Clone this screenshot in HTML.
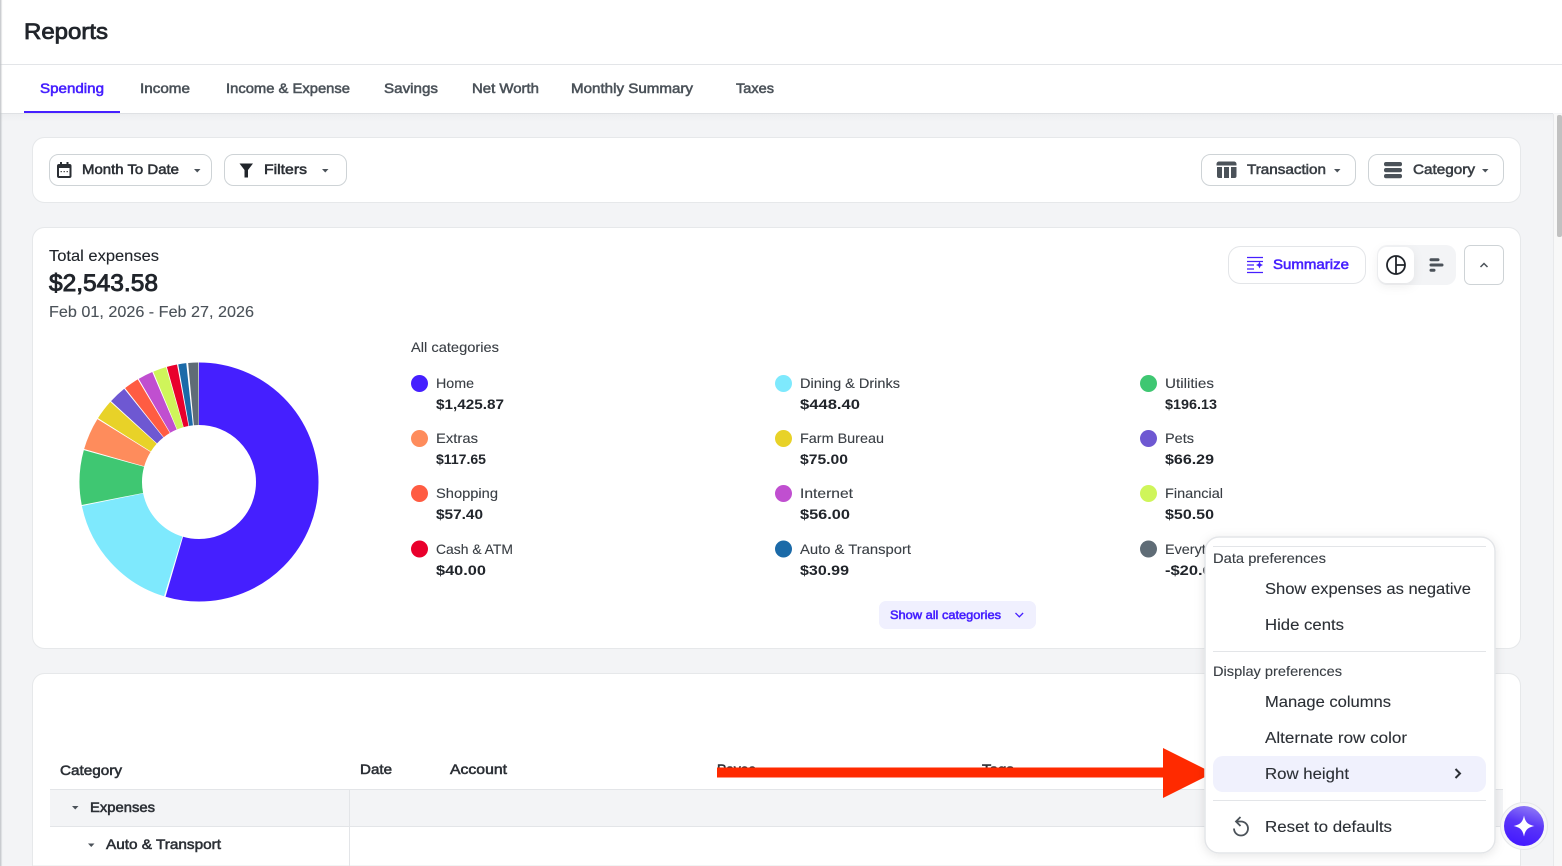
<!DOCTYPE html>
<html lang="en">
<head>
<meta charset="utf-8">
<title>Reports</title>
<style>
html,body{margin:0;padding:0;width:1562px;height:866px;overflow:hidden;background:#f3f4f6}
svg{display:block}
text{font-family:"Liberation Sans",sans-serif;font-size:14px;fill:#21252b}
.m{font-weight:700}
.tab{fill:#4b5259;stroke:#4b5259;stroke-width:.55}
.tp{fill:#451fff;stroke:#451fff;stroke-width:.55}
.bt{fill:#2c3036;stroke:#2c3036;stroke-width:.55}
.bt2{fill:#3a3f45;stroke:#3a3f45;stroke-width:.55}
.th{fill:#2c3036;stroke:#2c3036;stroke-width:.55}
.l{fill:#3a3f45;stroke:#3a3f45;stroke-width:.12}
.b16{font-size:16px;stroke:#21252b;stroke-width:.12}
.g{fill:#4b5259;stroke:#4b5259}
.mi{font-size:16px;fill:#2c3036;stroke:#2c3036;stroke-width:.12}
.card{fill:#fff;stroke:#e6e8ea;stroke-width:1}
.btn{fill:#fff;stroke:#ced3d6;stroke-width:1}
.line{stroke:#e3e5e8;stroke-width:1}
</style>
</head>
<body>
<svg width="1562" height="866" viewBox="0 0 1562 866" xmlns="http://www.w3.org/2000/svg">
<defs>
<linearGradient id="fab" x1="0.7" y1="0" x2="0.4" y2="1"><stop offset="0" stop-color="#8f7bf6"/><stop offset="0.45" stop-color="#5a35f8"/><stop offset="1" stop-color="#4318ff"/></linearGradient>
<linearGradient id="edge" x1="0" y1="0" x2="1" y2="0"><stop offset="0" stop-color="#bfc2c6"/><stop offset="1" stop-color="#bfc2c6" stop-opacity="0"/></linearGradient>
<linearGradient id="tabshadow" x1="0" y1="0" x2="0" y2="1"><stop offset="0" stop-color="#e6e8ea"/><stop offset="1" stop-color="#f3f4f6"/></linearGradient>
<filter id="sh" x="-15%" y="-15%" width="130%" height="130%"><feDropShadow dx="0" dy="2" stdDeviation="5" flood-color="#000" flood-opacity="0.1"/></filter>
<filter id="sh2" x="-40%" y="-40%" width="180%" height="200%"><feDropShadow dx="0" dy="3" stdDeviation="5" flood-color="#000" flood-opacity="0.07"/></filter>
</defs>

<rect width="1562" height="866" fill="#f3f4f6"/>
<!-- header -->
<rect width="1562" height="113" fill="#fff"/>
<line x1="0" y1="64.5" x2="1562" y2="64.5" class="line"/>
<line x1="0" y1="113.5" x2="1553" y2="113.5" stroke="#dfe1e4"/>
<rect x="0" y="114" width="1553" height="8" fill="url(#tabshadow)" opacity=".5"/>
<text x="24" y="39" style="font-size:22px;stroke:#21252b;stroke-width:.8" textLength="84" lengthAdjust="spacingAndGlyphs">Reports</text>

<text x="40" y="93" class="tp" textLength="64" lengthAdjust="spacingAndGlyphs">Spending</text>
<text x="140" y="93" class="tab" textLength="50" lengthAdjust="spacingAndGlyphs">Income</text>
<text x="226" y="93" class="tab" textLength="124" lengthAdjust="spacingAndGlyphs">Income &amp; Expense</text>
<text x="384" y="93" class="tab" textLength="54" lengthAdjust="spacingAndGlyphs">Savings</text>
<text x="472" y="93" class="tab" textLength="67" lengthAdjust="spacingAndGlyphs">Net Worth</text>
<text x="571" y="93" class="tab" textLength="122" lengthAdjust="spacingAndGlyphs">Monthly Summary</text>
<text x="736" y="93" class="tab" textLength="38" lengthAdjust="spacingAndGlyphs">Taxes</text>
<rect x="24" y="111" width="96" height="2" fill="#451fff"/>

<!-- filter card -->
<rect x="32.5" y="137.5" width="1488" height="65" rx="12" class="card"/>
<rect x="49.5" y="154.5" width="162" height="31" rx="9" class="btn"/>
<rect x="57" y="164" width="14.500" height="14" rx="2" fill="#2a2e33"/>
<rect x="59" y="168" width="10.500" height="8" fill="#fff"/>
<rect x="60" y="162" width="2" height="3" fill="#2a2e33"/><rect x="66.500" y="162" width="2" height="3" fill="#2a2e33"/>
<rect x="60.500" y="171" width="1.500" height="1.200" fill="#555"/><rect x="63.500" y="171" width="1.500" height="1.200" fill="#555"/><rect x="66.500" y="171" width="1.500" height="1.200" fill="#555"/>
<text x="82" y="174" class="bt" textLength="97" lengthAdjust="spacingAndGlyphs">Month To Date</text>
<path d="M194 169h6.500l-3.250 3.500z" fill="#4b5259"/>
<rect x="224.500" y="154.500" width="122" height="31" rx="9" class="btn"/>
<path d="M239.500 163.500h13.500l-5 6.500v7.500h-3.500v-7.500z" fill="#21252b"/>
<text x="264" y="174" class="bt" textLength="43" lengthAdjust="spacingAndGlyphs">Filters</text>
<path d="M322 169h6.500l-3.250 3.500z" fill="#4b5259"/>

<rect x="1201.500" y="154.500" width="154" height="31" rx="9" class="btn"/>
<path d="M1219 161.500h15a2.500 2.500 0 0 1 2.500 2.500v1.500h-20V164a2.500 2.500 0 0 1 2.500-2.500z" fill="#4b5259"/>
<path d="M1217 167h5v11h-3a2 2 0 0 1-2-2zM1224 167h5v11h-5zM1231 167h5.500v9a2 2 0 0 1-2 2h-3.500z" fill="#4b5259"/>
<text x="1247" y="174" class="bt2" textLength="79" lengthAdjust="spacingAndGlyphs">Transaction</text>
<path d="M1334 169h6.500l-3.250 3.500z" fill="#4b5259"/>
<rect x="1368.500" y="154.500" width="135" height="31" rx="9" class="btn"/>
<rect x="1384" y="162" width="18" height="4.200" rx="2" fill="#4b5259"/><rect x="1384" y="168" width="18" height="4.200" rx="2" fill="#4b5259"/><rect x="1384" y="174" width="18" height="4.200" rx="2" fill="#4b5259"/>
<text x="1413" y="174" class="bt2" textLength="62" lengthAdjust="spacingAndGlyphs">Category</text>
<path d="M1482 169h6.500l-3.250 3.500z" fill="#4b5259"/>

<!-- expenses card -->
<rect x="32.500" y="227.500" width="1488" height="421" rx="12" class="card"/>
<text x="49" y="261" class="b16" textLength="110" lengthAdjust="spacingAndGlyphs">Total expenses</text>
<text x="49" y="291" style="font-size:24px;stroke:#21252b;stroke-width:.9" textLength="109" lengthAdjust="spacingAndGlyphs">$2,543.58</text>
<text x="49" y="317" class="b16 g" textLength="205" lengthAdjust="spacingAndGlyphs">Feb 01, 2026 - Feb 27, 2026</text>

<rect x="1228.500" y="246.500" width="137" height="37" rx="12" fill="#fff" stroke="#e3e5e8"/>
<g stroke="#451fff" stroke-width="1.300" fill="none">
<path d="M1247 257.500h16M1247 261.500h16M1247 265h7M1247 269h7M1247 272.500h16"/>
</g>
<path d="M1259.500 261.500l1.100 2.400 2.400 1.100-2.400 1.100-1.100 2.400-1.100-2.400-2.400-1.100 2.400-1.100z" fill="#451fff"/>
<text x="1273" y="269" class="tp" textLength="76" lengthAdjust="spacingAndGlyphs">Summarize</text>

<rect x="1377" y="245" width="79" height="40" rx="10" fill="#f3f4f6"/>
<rect x="1378" y="247" width="36" height="36" rx="9" fill="#fff" filter="url(#sh2)"/>
<circle cx="1396" cy="265" r="9" fill="none" stroke="#21252b" stroke-width="1.800"/>
<path d="M1396 256v18M1396 265h9" stroke="#21252b" stroke-width="1.800" fill="none"/>
<g stroke="#4b5259" stroke-width="3" stroke-linecap="round">
<path d="M1431 259.800h7M1431 265h11M1431 270.200h3"/>
</g>
<rect x="1464.500" y="245.500" width="39" height="39" rx="6" class="btn"/>
<path d="M1480.500 267l3.500-3.500 3.500 3.500" fill="none" stroke="#4b5259" stroke-width="1.500"/>

<!-- donut -->
<g fill="none" stroke-width="62.500">
<circle cx="199" cy="482" r="88.250" pathLength="360" stroke-dasharray="196.500 360" stroke="#451fff" transform="rotate(-90 199 482)"/>
<circle cx="199" cy="482" r="88.250" pathLength="360" stroke-dasharray="61.500 360" stroke="#7ee9fd" transform="rotate(107 199 482)"/>
<circle cx="199" cy="482" r="88.250" pathLength="360" stroke-dasharray="26.600 360" stroke="#3fc772" transform="rotate(168.900 199 482)"/>
<circle cx="199" cy="482" r="88.250" pathLength="360" stroke-dasharray="15.800 360" stroke="#fe8c5c" transform="rotate(196 199 482)"/>
<circle cx="199" cy="482" r="88.250" pathLength="360" stroke-dasharray="9.800 360" stroke="#e8d228" transform="rotate(212.300 199 482)"/>
<circle cx="199" cy="482" r="88.250" pathLength="360" stroke-dasharray="8.700 360" stroke="#6e58d2" transform="rotate(222.600 199 482)"/>
<circle cx="199" cy="482" r="88.250" pathLength="360" stroke-dasharray="7.400 360" stroke="#ff5c42" transform="rotate(231.800 199 482)"/>
<circle cx="199" cy="482" r="88.250" pathLength="360" stroke-dasharray="7.300 360" stroke="#c04fd0" transform="rotate(239.700 199 482)"/>
<circle cx="199" cy="482" r="88.250" pathLength="360" stroke-dasharray="6.500 360" stroke="#cff55a" transform="rotate(247.500 199 482)"/>
<circle cx="199" cy="482" r="88.250" pathLength="360" stroke-dasharray="5 360" stroke="#e9002c" transform="rotate(254.400 199 482)"/>
<circle cx="199" cy="482" r="88.250" pathLength="360" stroke-dasharray="3.900 360" stroke="#1b6aa8" transform="rotate(260 199 482)"/>
<circle cx="199" cy="482" r="88.250" pathLength="360" stroke-dasharray="4.900 360" stroke="#5f6c76" transform="rotate(264.800 199 482)"/>
</g>

<!-- legend -->
<text x="411" y="352" class="l" textLength="88" lengthAdjust="spacingAndGlyphs">All categories</text>

<circle cx="419.500" cy="383.500" r="8.500" fill="#451fff"/>
<text x="436" y="388" class="l" textLength="38" lengthAdjust="spacingAndGlyphs">Home</text>
<text x="436" y="409" class="m" textLength="68" lengthAdjust="spacingAndGlyphs">$1,425.87</text>
<circle cx="419.500" cy="438.500" r="8.500" fill="#fe8c5c"/>
<text x="436" y="443" class="l" textLength="42" lengthAdjust="spacingAndGlyphs">Extras</text>
<text x="436" y="464" class="m" textLength="50" lengthAdjust="spacingAndGlyphs">$117.65</text>
<circle cx="419.500" cy="493.500" r="8.500" fill="#ff5c42"/>
<text x="436" y="498" class="l" textLength="62" lengthAdjust="spacingAndGlyphs">Shopping</text>
<text x="436" y="519" class="m" textLength="47" lengthAdjust="spacingAndGlyphs">$57.40</text>
<circle cx="419.500" cy="549" r="8.500" fill="#e9002c"/>
<text x="436" y="554" class="l" textLength="77" lengthAdjust="spacingAndGlyphs">Cash &amp; ATM</text>
<text x="436" y="575" class="m" textLength="50" lengthAdjust="spacingAndGlyphs">$40.00</text>

<circle cx="783.500" cy="383.500" r="8.500" fill="#7ee9fd"/>
<text x="800" y="388" class="l" textLength="100" lengthAdjust="spacingAndGlyphs">Dining &amp; Drinks</text>
<text x="800" y="409" class="m" textLength="60" lengthAdjust="spacingAndGlyphs">$448.40</text>
<circle cx="783.500" cy="438.500" r="8.500" fill="#e8d228"/>
<text x="800" y="443" class="l" textLength="84" lengthAdjust="spacingAndGlyphs">Farm Bureau</text>
<text x="800" y="464" class="m" textLength="48" lengthAdjust="spacingAndGlyphs">$75.00</text>
<circle cx="783.500" cy="493.500" r="8.500" fill="#c04fd0"/>
<text x="800" y="498" class="l" textLength="53" lengthAdjust="spacingAndGlyphs">Internet</text>
<text x="800" y="519" class="m" textLength="50" lengthAdjust="spacingAndGlyphs">$56.00</text>
<circle cx="783.500" cy="549" r="8.500" fill="#1b6aa8"/>
<text x="800" y="554" class="l" textLength="111" lengthAdjust="spacingAndGlyphs">Auto &amp; Transport</text>
<text x="800" y="575" class="m" textLength="49" lengthAdjust="spacingAndGlyphs">$30.99</text>

<circle cx="1148.500" cy="383.500" r="8.500" fill="#3fc772"/>
<text x="1165" y="388" class="l" textLength="49" lengthAdjust="spacingAndGlyphs">Utilities</text>
<text x="1165" y="409" class="m" textLength="52" lengthAdjust="spacingAndGlyphs">$196.13</text>
<circle cx="1148.500" cy="438.500" r="8.500" fill="#6e58d2"/>
<text x="1165" y="443" class="l" textLength="29" lengthAdjust="spacingAndGlyphs">Pets</text>
<text x="1165" y="464" class="m" textLength="49" lengthAdjust="spacingAndGlyphs">$66.29</text>
<circle cx="1148.500" cy="493.500" r="8.500" fill="#cff55a"/>
<text x="1165" y="498" class="l" textLength="58" lengthAdjust="spacingAndGlyphs">Financial</text>
<text x="1165" y="519" class="m" textLength="49" lengthAdjust="spacingAndGlyphs">$50.50</text>
<circle cx="1148.500" cy="549" r="8.500" fill="#5f6c76"/>
<text x="1165" y="554" class="l" textLength="68" lengthAdjust="spacingAndGlyphs">Everything</text>
<text x="1165" y="575" class="m" textLength="56" lengthAdjust="spacingAndGlyphs">-$20.65</text>

<rect x="879" y="601" width="157" height="28" rx="7" fill="#f0f0fe"/>
<text x="890" y="619" class="tp" style="font-size:12px" textLength="111" lengthAdjust="spacingAndGlyphs">Show all categories</text>
<path d="M1015.500 613l3.800 3.800 3.800-3.800" fill="none" stroke="#451fff" stroke-width="1.300"/>

<!-- table card -->
<path d="M32.500 866V685.500a12 12 0 0 1 12-12H1508.500a12 12 0 0 1 12 12V866z" class="card"/>
<text x="60" y="775" class="th" textLength="62" lengthAdjust="spacingAndGlyphs">Category</text>
<text x="360" y="774" class="th" textLength="32" lengthAdjust="spacingAndGlyphs">Date</text>
<text x="450" y="774" class="th" textLength="57" lengthAdjust="spacingAndGlyphs">Account</text>
<text x="717" y="774" class="th" textLength="39" lengthAdjust="spacingAndGlyphs">Payee</text>
<text x="982" y="774" class="th" textLength="32" lengthAdjust="spacingAndGlyphs">Tags</text>
<rect x="50" y="790" width="1453" height="36" fill="#f3f4f6"/>
<line x1="50" y1="789.500" x2="1503" y2="789.500" class="line"/>
<line x1="50" y1="826.500" x2="1503" y2="826.500" class="line"/>
<line x1="349.500" y1="790" x2="349.500" y2="866" class="line"/>
<path d="M72 806h6.500l-3.250 3.500z" fill="#4b5259"/>
<text x="90" y="812" class="bt" textLength="65" lengthAdjust="spacingAndGlyphs">Expenses</text>
<path d="M88 843.500h6.500l-3.250 3.500z" fill="#4b5259"/>
<text x="106" y="849" class="bt" textLength="115" lengthAdjust="spacingAndGlyphs">Auto &amp; Transport</text>

<!-- annotation arrow -->
<rect x="717" y="767.500" width="450" height="10" fill="#ff2a00"/>
<path d="M1163 748L1213 773 1163 798z" fill="#ff2a00"/>

<!-- menu -->
<rect x="1205" y="537" width="290" height="316" rx="14" fill="#fff" stroke="#e3e5e8" stroke-width="1.500" filter="url(#sh)"/>
<line x1="1213" y1="546.500" x2="1486" y2="546.500" class="line"/>
<text x="1213" y="563" class="l" textLength="113" lengthAdjust="spacingAndGlyphs">Data preferences</text>
<text x="1265" y="594" class="mi" textLength="206" lengthAdjust="spacingAndGlyphs">Show expenses as negative</text>
<text x="1265" y="630" class="mi" textLength="79" lengthAdjust="spacingAndGlyphs">Hide cents</text>
<line x1="1213" y1="651.500" x2="1486" y2="651.500" class="line"/>
<text x="1213" y="676" class="l" textLength="129" lengthAdjust="spacingAndGlyphs">Display preferences</text>
<text x="1265" y="707" class="mi" textLength="126" lengthAdjust="spacingAndGlyphs">Manage columns</text>
<text x="1265" y="743" class="mi" textLength="142" lengthAdjust="spacingAndGlyphs">Alternate row color</text>
<rect x="1213" y="756" width="273" height="36" rx="10" fill="#f0f1fd"/>
<text x="1265" y="779" class="mi" textLength="84" lengthAdjust="spacingAndGlyphs">Row height</text>
<path d="M1455.500 769l4.500 4.500-4.500 4.500" fill="none" stroke="#2c3036" stroke-width="2"/>
<line x1="1213" y1="800.500" x2="1486" y2="800.500" class="line"/>
<path d="M1240.500 817l-4.500 4.500 4.500 4.500M1236 821.500h5a7 7 0 1 1-7 7" fill="none" stroke="#4b5259" stroke-width="1.800"/>
<text x="1265" y="832" class="mi" textLength="127" lengthAdjust="spacingAndGlyphs">Reset to defaults</text>

<!-- assistant button -->
<circle cx="1524" cy="826" r="23.500" fill="#f6f6f8" stroke="#e6e8ea"/>
<circle cx="1524" cy="826" r="20" fill="url(#fab)"/>
<path d="M1524 815.500c1.300 6.500 3.500 9 10.500 10.500-7 1.500-9.200 4-10.500 10.500-1.300-6.500-3.500-9-10.500-10.500 7-1.500 9.200-4 10.500-10.500z" fill="#fff"/>

<!-- scrollbar and left edge -->
<rect x="1553" y="114" width="9" height="752" fill="#f8f8f8"/>
<line x1="1553.500" y1="114" x2="1553.500" y2="866" stroke="#e8e9eb"/>
<rect x="1557" y="115" width="5" height="122" rx="2" fill="#c1c1c1"/>
<rect x="0" y="0" width="2.500" height="866" fill="url(#edge)"/>
</svg>
</body>
</html>
